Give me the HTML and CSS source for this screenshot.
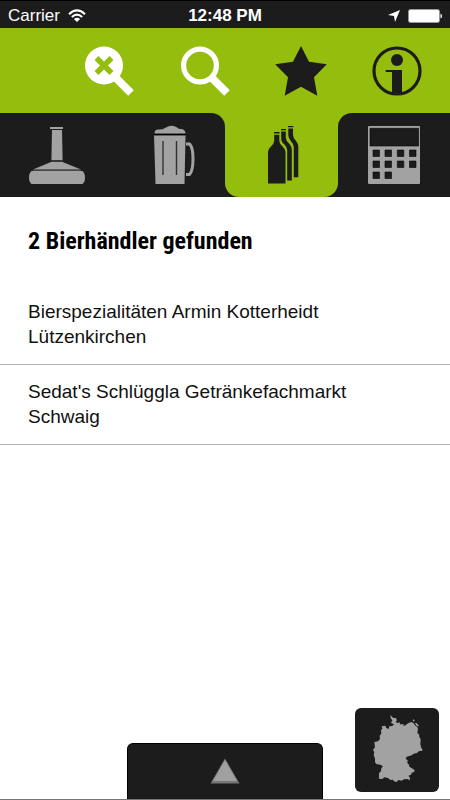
FILE: index.html
```html
<!DOCTYPE html>
<html lang="de">
<head>
<meta charset="utf-8">
<meta name="viewport" content="width=device-width, initial-scale=1">
<title>Bierhändler</title>
<link rel="stylesheet" href="styles.css">
</head>
<body>
<div class="status">
  <div class="status-left">
    <span>Carrier</span>
    <svg width="18" height="14" viewBox="0 0 18 14" fill="none" stroke="#fff" stroke-width="2">
      <path d="M1 5.2Q9-2.4 17 5.2"/><path d="M3.8 8Q9 3.2 14.2 8"/><path d="M9 13L5.9 9.9Q9 7.4 12.1 9.9Z" fill="#fff" stroke="none"/>
    </svg>
  </div>
  <span class="time">12:48 PM</span>
  <div class="status-right">
    <svg width="12" height="12" viewBox="0 0 12 12" fill="#fff"><path d="M12 0L7 12L6 6L0 5Z"/></svg>
    <svg width="34" height="14" viewBox="0 0 34 14"><rect x=".5" y=".5" width="31" height="13" rx="2" fill="#fff" stroke="#999"/><path d="M32.5 4.5Q34 5 34 7T32.5 9.5Z" fill="#fff"/></svg>
  </div>
</div>

<header class="toolbar">
  <button type="button" class="tool" aria-label="Suche löschen">
    <svg width="52" height="52" viewBox="0 0 52 52" fill="none"><circle cx="21" cy="20.5" r="19" fill="#fff"/><path d="M31 31L48 48" stroke="#fff" stroke-width="8"/><path d="M13.5 13L28.5 28M28.5 13L13.5 28" stroke="#94bd0d" stroke-width="5.5"/></svg>
  </button>
  <button type="button" class="tool" aria-label="Suchen">
    <svg width="52" height="52" viewBox="0 0 52 52" fill="none" stroke="#fff"><circle cx="21" cy="20.5" r="16.4" stroke-width="5.2"/><path d="M32 32L48 48" stroke-width="8"/></svg>
  </button>
  <button type="button" class="tool" aria-label="Favoriten">
    <svg width="52" height="52" viewBox="0 0 52 52" fill="#1c1c1c"><path d="M26 1L34 16.7L51.8 19.3L39 32.3L42.3 50.7L26 41.8L9.7 50.7L13 32.3L.2 19.3L18 16.7Z"/></svg>
  </button>
  <button type="button" class="tool" aria-label="Info">
    <svg width="52" height="52" viewBox="0 0 52 52" fill="#1c1c1c"><circle cx="26" cy="26" r="23" fill="none" stroke="#1c1c1c" stroke-width="3.2"/><circle cx="26" cy="15" r="6"/><path d="M14.7 25H31V49.5H21V27H14.7Z"/></svg>
  </button>
</header>

<nav class="tabs">
  <a class="tab" href="#brauereien" aria-label="Brauereien">
    <svg width="60" height="60" viewBox="0 0 60 60" fill="#a2a2a2"><path d="M24 2H37V4H24ZM26 5H36L36.6 35H25.4ZM25 37H36.500L55 44.500H7Z"/><path d="M5.500 46H56.500Q59 48 59 52.500T56.500 59H5.500Q3 57 3 52.500T5.500 46Z"/><path d="M7 45.300H55" stroke="#555"/><path d="M25 36H37" stroke="#555"/></svg>
  </a>
  <a class="tab tab-before" href="#biere" aria-label="Biere">
    <svg width="60" height="60" viewBox="0 0 60 60" fill="#a2a2a2"><path d="M15.500 8.500Q15.500 4 20 4.500Q24 4.500 26 3Q33-1 38 2.500Q40 4.500 43 4Q46.500 5 46.500 8.500Z"/><path d="M15 10.500H46.500L45.500 59H16.500Z"/><path d="M15 9.500H47" stroke="#000"/><path d="M24 16V50M37.500 16V50" stroke="#333" stroke-width="1.400"/><path d="M47 19H50.500Q54 22 54 34T50.500 49.500H47" fill="none" stroke="#a2a2a2" stroke-width="3"/></svg>
  </a>
  <a class="tab tab-active" href="#haendler" aria-label="Bierhändler" aria-current="page">
    <svg width="60" height="60" viewBox="0 0 60 60" fill="#1c1c1c"><path d="M23 7H28.500V8.500H23ZM23.200 9.700H28.300V16Q28.500 19 32 22Q34.500 24 34.500 27V58.500H17V27Q17 24 19.500 22Q23 19 23.200 16Z"/><path d="M30 4H35V5.300H30ZM30.200 6.500H34.800V13Q35 16 38.500 19Q40.800 21.500 40.800 25V55.500H36.200V25Q36 22 33 19Q30.200 17 30.200 13Z"/><path d="M37 1H42.300V2.300H37ZM37.300 3.500H42V10Q42 13 45 16Q47.300 18.500 47.300 22V52.300H42.800V22Q42.700 19 39.800 16Q37.300 13 37.300 10Z"/></svg>
  </a>
  <a class="tab tab-after" href="#kalender" aria-label="Kalender">
    <svg width="60" height="60" viewBox="0 0 60 60"><rect x="4" y="1" width="52" height="58" rx="1" fill="#a2a2a2"/><path fill="#1c1c1c" stroke="#050505" stroke-width=".6" d="M6 3.300H54.600V21H6ZM9 25H15.500V31.500H9ZM21 25H27.500V31.500H21ZM33.300 25H39.800V31.500H33.300ZM45.500 25H52V31.500H45.500ZM9 36H15.500V42.500H9ZM21 36H27.500V42.500H21ZM33.300 36H39.800V42.500H33.300ZM45.500 36H52V42.500H45.500ZM9 47H15.500V53.500H9ZM21 47H27.500V53.500H21Z"/></svg>
  </a>
</nav>

<main class="content">
  <h1 class="title">2 Bierhändler gefunden</h1>
  <ul class="results">
    <li><a class="result" href="#kotterheidt"><span>Bierspezialitäten Armin Kotterheidt</span><span>Lützenkirchen</span></a></li>
    <li><a class="result" href="#schlueggla"><span>Sedat's Schlüggla Getränkefachmarkt</span><span>Schwaig</span></a></li>
  </ul>
</main>

<footer class="bottom">
  <button type="button" class="drawer" aria-label="Öffnen">
    <svg width="30" height="26" viewBox="0 0 30 26"><path d="M15 .5L29.500 25.500H.5Z" fill="#777"/><path d="M15 2L27 23H3Z" fill="#a0a0a0"/></svg>
  </button>
  <button type="button" class="map" aria-label="Deutschlandkarte">
    <svg width="84" height="84" viewBox="30 24 252 252" fill="#a2a2a2"><path d="M136 45L144 53L154 55L155 62L152 66L158 69L164 67L165 73L177 73L174 78L182 76L189 70L199 66L206 70L211 77L217 81L219 88L217 99L222 103L223 111L227 118L226 133L229 145L233 149L230 153L222 153L216 159L206 161L200 166L185 170L182 176L188 181L187 189L192 194L193 200L201 205L209 211L207 216L200 218L198 224L190 227L195 233L194 241L187 237L177 238L169 242L160 240L155 246L147 244L144 239L136 240L129 234L118 232L112 237L102 236L102 220L108 213L109 205L114 199L106 194L94 192L90 187L90 176L86 165L88 157L84 150L90 142L88 126L99 124L105 117L104 107L109 101L108 91L112 86L110 79L121 77L124 84L131 87L133 79L142 78L147 73L138 69L142 61L137 55Z"/><path d="M205 58L209 61L207 65L203 62ZM209 68L216 70L222 78L216 79Z"/></svg>
  </button>
</footer>
</body>
</html>
```
FILE: styles.css
```css
:root {
  --green: #94bd0d;
  --dark: #1c1c1c;
  --line: #b4b4b4;
}

* {
  box-sizing: border-box;
}

body {
  margin: 0;
  min-height: 100vh;
  display: flex;
  flex-direction: column;
  background: #fff;
  color: #000;
  font-family: "Liberation Sans", Arial, sans-serif;
}

svg {
  display: block;
}

button {
  margin: 0;
  padding: 0;
  border: 0;
  background: none;
  cursor: pointer;
}

.status {
  display: grid;
  grid-template-columns: 1fr auto 1fr;
  align-items: center;
  height: 28px;
  padding: 2px 8px 0;
  border-top: 1px solid #000;
  background: var(--dark);
  color: #fff;
  font-size: 17px;
}

.status-left,
.status-right {
  display: flex;
  align-items: center;
  gap: 8px;
}

.status-right {
  justify-content: flex-end;
}

.time {
  font-weight: bold;
}

.toolbar {
  display: flex;
  justify-content: flex-end;
  align-items: center;
  gap: 44px;
  height: 85px;
  padding-right: 27px;
  background: var(--green);
}

.tabs {
  display: grid;
  grid-template-columns: repeat(4, 1fr);
  height: 84px;
  background: linear-gradient(var(--green) 50%, var(--dark) 50%);
}

.tab {
  display: flex;
  align-items: center;
  justify-content: center;
  background: var(--dark);
}

.tab-before {
  border-top-right-radius: 14px;
}

.tab-after {
  border-top-left-radius: 14px;
}

.tab-active {
  background: var(--green);
  border-radius: 0 0 14px 14px;
}

.content {
  flex: 1;
}

.title {
  margin: 0;
  padding: 30px 28px;
  font-family: "Roboto Condensed", Roboto, sans-serif;
  font-size: 24px;
  line-height: 28px;
}

.results {
  margin: 0;
  padding: 0;
  list-style: none;
}

.result {
  display: flex;
  flex-direction: column;
  padding: 14px 28px 15px;
  border-bottom: 1px solid var(--line);
  color: #111;
  font-size: 19px;
  line-height: 25px;
  text-decoration: none;
}

.bottom {
  display: grid;
  grid-template-columns: 1fr auto 1fr;
  align-items: end;
  border-bottom: 1px solid #777;
}

.drawer {
  grid-column: 2;
  display: flex;
  justify-content: center;
  width: 196px;
  height: 56px;
  padding-top: 14px;
  border: 1px solid #000;
  border-bottom: 0;
  border-radius: 6px 6px 0 0;
  background: var(--dark);
}

.map {
  justify-self: end;
  margin: 0 11px 7px 0;
  border-radius: 6px;
  background: var(--dark);
}
```
